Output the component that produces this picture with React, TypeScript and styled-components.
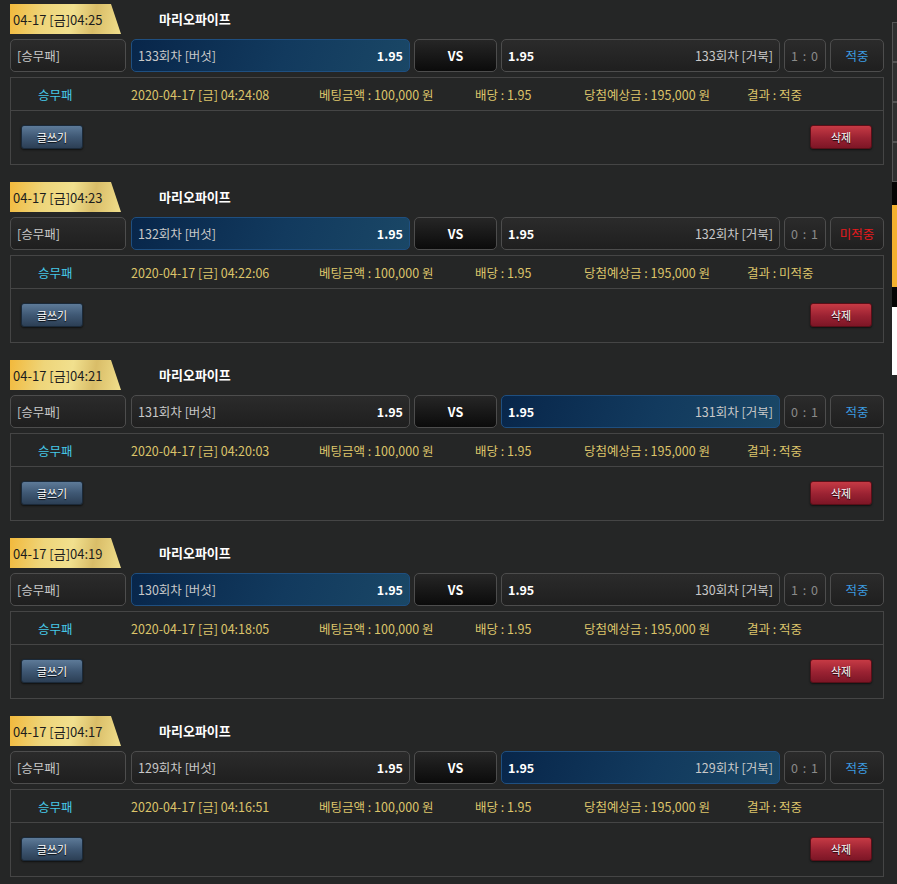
import styled, { createGlobalStyle } from "styled-components";

//#region style-component
const GlobalStyle = createGlobalStyle`
  html, body {
    margin: 0;
    padding: 0;
    background-color: #252626;
  }
  body {
    font-family: "Noto Sans CJK KR", "Noto Sans", sans-serif;
    font-size: 12.5px;
    color: #ddd;
  }
`;

const Page = styled.div`
  padding: 4px 13px 0 10px;
  width: 874px;
`;

const Block = styled.section`
  margin-bottom: 17px;
`;

const Head = styled.div`
  display: flex;
  align-items: center;
  height: 30px;
`;

const TimeLabel = styled.div`
  width: 111px;
  height: 30px;
  padding-left: 3px;
  box-sizing: border-box;
  display: flex;
  align-items: center;
  color: #1c1c1c;
  font-size: 13px;
  background: linear-gradient(100deg, #f2b93c 0%, #eed57a 30%, #f1e08e 55%, #d9bd68 75%, #f1df8c 100%);
  clip-path: polygon(0 0, 101px 0, 111px 100%, 0 100%);
`;

const GameTitle = styled.div`
  margin-left: 38px;
  margin-top: -2px;
  font-weight: 700;
  color: #fff;
  font-size: 13px;
`;

const Row = styled.div`
  display: flex;
  gap: 4px;
  margin-top: 5px;
  height: 33px;
`;

const Cell = styled.div<{ $w: number; $selected?: boolean; $center?: boolean }>`
  width: ${p => p.$w}px;
  flex: none;
  box-sizing: border-box;
  border: 1px solid ${p => (p.$selected ? "#1f4f80" : "#4d4d4d")};
  border-radius: 5px;
  display: flex;
  align-items: center;
  justify-content: ${p => (p.$center ? "center" : "space-between")};
  padding: 0 6px;
  color: #c8c8c8;
  background: ${p =>
    p.$selected
      ? "linear-gradient(110deg, #08264a 0%, #123a5e 55%, #1a4766 100%)"
      : "linear-gradient(180deg, #2b2b2b 0%, #1f1f1f 100%)"};
`;

const TypeCell = styled(Cell)`
  margin-right: 1px;
`;

const VsCell = styled(Cell)`
  background: linear-gradient(180deg, #262626 0%, #0b0b0b 100%);
  color: #fff;
  font-weight: 700;
`;

const Odds = styled.span`
  color: #fff;
  font-weight: 700;
`;

const Score = styled(Cell)`
  color: #8a8a8a;
  letter-spacing: 1px;
`;

const Result = styled(Cell)<{ $miss?: boolean }>`
  color: ${p => (p.$miss ? "#e8191c" : "#3b9be0")};
`;

const InfoBox = styled.div`
  margin-top: 5px;
  border: 1px solid #454545;
  height: 88px;
  box-sizing: border-box;
`;

const InfoRow = styled.div`
  display: flex;
  align-items: center;
  height: 32px;
  padding-left: 27px;
  border-bottom: 1px solid #454545;
  color: #dcc46a;
`;

const InfoCol = styled.span<{ $w?: number; $cyan?: boolean }>`
  width: ${p => (p.$w ? `${p.$w}px` : "auto")};
  flex: none;
  color: ${p => (p.$cyan ? "#45c8e8" : "#dcc46a")};
`;

const Actions = styled.div`
  display: flex;
  justify-content: space-between;
  padding: 14px 11px 0 10px;
`;

const Button = styled.button<{ $danger?: boolean }>`
  width: 62px;
  height: 24px;
  border-radius: 3px;
  font-family: inherit;
  font-size: 11px;
  color: #fff;
  text-shadow: 0 1px 1px #000;
  cursor: pointer;
  border: 1px solid ${p => (p.$danger ? "#5a0f18" : "#1b2a3a")};
  background: ${p =>
    p.$danger
      ? "linear-gradient(180deg, #c63a44 0%, #9a2232 55%, #7d1626 100%)"
      : "linear-gradient(180deg, #5d7a98 0%, #3f5874 50%, #2c3f55 100%)"};
  box-shadow: 0 1px 2px rgba(0, 0, 0, 0.6);
`;

const SideStrip = styled.div`
  position: fixed;
  top: 22px;
  right: 0;
  width: 5px;
  display: flex;
  flex-direction: column;
`;

const SideTab = styled.div`
  height: 38px;
  background: #2f3030;
  border: 1px solid #555;
  border-right: none;
`;

const SideBand = styled.div<{ $h: number; $c: string }>`
  height: ${p => p.$h}px;
  background: ${p => p.$c};
`;
//#endregion

//#region interface
interface Bet {
  round: number;
  time: string;
  betTime: string;
  pick: "home" | "away";
  score: string;
  hit: boolean;
}
//#endregion

const bets: Bet[] = [
  { round: 133, time: "04:25", betTime: "04:24:08", pick: "home", score: "1 : 0", hit: true },
  { round: 132, time: "04:23", betTime: "04:22:06", pick: "home", score: "0 : 1", hit: false },
  { round: 131, time: "04:21", betTime: "04:20:03", pick: "away", score: "0 : 1", hit: true },
  { round: 130, time: "04:19", betTime: "04:18:05", pick: "home", score: "1 : 0", hit: true },
  { round: 129, time: "04:17", betTime: "04:16:51", pick: "away", score: "0 : 1", hit: true },
];

function App() {
  return <Page>
    <GlobalStyle />
    {bets.map(bet => {
      const result = bet.hit ? "적중" : "미적중";
      return (
        <Block key={bet.round}>
          <Head>
            <TimeLabel>04-17 [금]{bet.time}</TimeLabel>
            <GameTitle>마리오파이프</GameTitle>
          </Head>
          <Row>
            <TypeCell $w={116}>[승무패]</TypeCell>
            <Cell $w={279} $selected={bet.pick === "home"}>
              <span>{bet.round}회차 [버섯]</span>
              <Odds>1.95</Odds>
            </Cell>
            <VsCell $w={83} $center>VS</VsCell>
            <Cell $w={279} $selected={bet.pick === "away"}>
              <Odds>1.95</Odds>
              <span>{bet.round}회차 [거북]</span>
            </Cell>
            <Score $w={42} $center>{bet.score}</Score>
            <Result $w={54} $center $miss={!bet.hit}>{result}</Result>
          </Row>
          <InfoBox>
            <InfoRow>
              <InfoCol $w={93} $cyan>승무패</InfoCol>
              <InfoCol $w={188}>2020-04-17 [금] {bet.betTime}</InfoCol>
              <InfoCol $w={156}>베팅금액 : 100,000 원</InfoCol>
              <InfoCol $w={109}>배당 : 1.95</InfoCol>
              <InfoCol $w={163}>당첨예상금 : 195,000 원</InfoCol>
              <InfoCol>결과 : {result}</InfoCol>
            </InfoRow>
            <Actions>
              <Button type="button">글쓰기</Button>
              <Button type="button" $danger>삭제</Button>
            </Actions>
          </InfoBox>
        </Block>
      );
    })}
    <SideStrip>
      <SideTab />
      <SideTab />
      <SideTab />
      <SideTab />
      <SideBand $h={23} $c="#050505" />
      <SideBand $h={82} $c="#f3b12f" />
      <SideBand $h={20} $c="#050505" />
      <SideBand $h={68} $c="#ffffff" />
    </SideStrip>
  </Page>
}
export default App;
